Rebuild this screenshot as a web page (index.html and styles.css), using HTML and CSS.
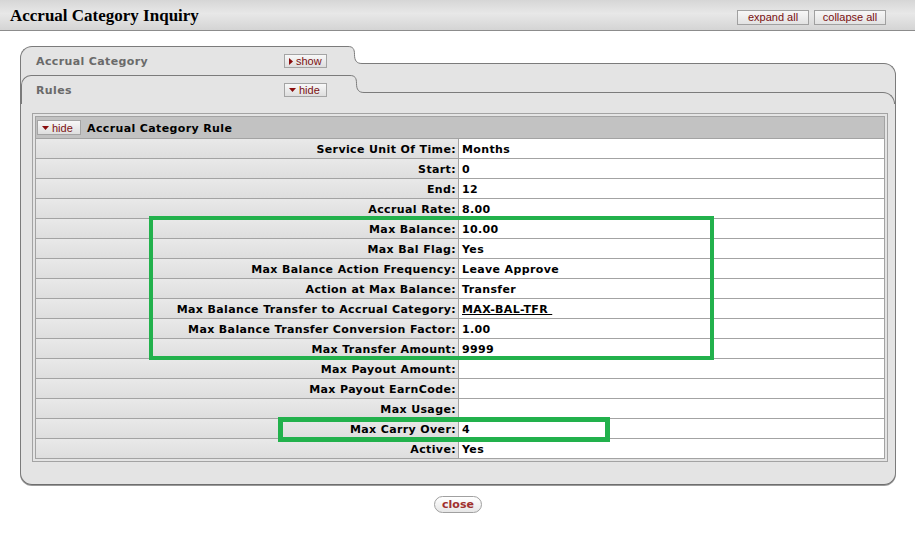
FILE: index.html
```html
<!DOCTYPE html>
<html>
<head>
<meta charset="utf-8">
<title>Accrual Category Inquiry</title>
<link rel="stylesheet" href="styles.css">
</head>
<body>
<div class="header">
  <h1 class="title">Accrual Category Inquiry</h1>
  <div class="hbtns">
    <button class="hbtn">expand all</button>
    <button class="hbtn">collapse all</button>
  </div>
</div>
<div class="main">
  <div class="tab1">
    <div class="tabhead">
      <div class="tab-l">
        <span class="tab-title">Accrual Category</span>
        <button class="tog"><svg class="tri-r" width="4" height="7" viewBox="0 0 4 7"><path d="M0 0 L4 3.5 L0 7 Z"/></svg>show</button>
      </div>
      <svg class="curve" width="14" height="29" viewBox="0 0 14 29"><path class="cfill" d="M0 0.5 C5 0.5 6.5 3 6.5 8.5 C6.5 14.5 8.5 17.5 14 17.5 L14 29 L0 29 Z"/><path class="cline" d="M0 0.5 C5 0.5 6.5 3 6.5 8.5 C6.5 14.5 8.5 17.5 14 17.5"/></svg>
      <div class="tab-r"></div>
    </div>
    <div class="tab1-body">
      <div class="tabhead t2">
        <div class="tab-l">
          <span class="tab-title">Rules</span>
          <button class="tog"><svg class="tri-d" width="7" height="4" viewBox="0 0 7 4"><path d="M0 0 L7 0 L3.5 4 Z"/></svg>hide</button>
        </div>
        <svg class="curve" width="14" height="29" viewBox="0 0 14 29"><path class="cfill" d="M0 0.5 C5 0.5 6.5 3 6.5 8.5 C6.5 14.5 8.5 17.5 14 17.5 L14 29 L0 29 Z"/><path class="cline" d="M0 0.5 C5 0.5 6.5 3 6.5 8.5 C6.5 14.5 8.5 17.5 14 17.5"/></svg>
        <div class="tab-r"></div>
      </div>
      <div class="content">
        <div class="box">
          <table class="rules">
            <colgroup><col class="c1"><col class="c2"></colgroup>
            <tr class="hrow">
              <td colspan="2"><div class="hcell"><button class="tog small"><svg class="tri-d" width="7" height="4" viewBox="0 0 7 4"><path d="M0 0 L7 0 L3.5 4 Z"/></svg>hide</button><span class="sect">Accrual Category Rule</span></div></td>
            </tr>
            <tr><th>Service Unit Of Time:</th><td>Months</td></tr>
            <tr><th>Start:</th><td>0</td></tr>
            <tr><th>End:</th><td>12</td></tr>
            <tr><th>Accrual Rate:</th><td>8.00</td></tr>
            <tr><th>Max Balance:</th><td>10.00</td></tr>
            <tr><th>Max Bal Flag:</th><td>Yes</td></tr>
            <tr><th>Max Balance Action Frequency:</th><td>Leave Approve</td></tr>
            <tr><th>Action at Max Balance:</th><td>Transfer</td></tr>
            <tr><th>Max Balance Transfer to Accrual Category:</th><td><a class="lnk" href="#">MAX-BAL-TFR&nbsp;</a></td></tr>
            <tr><th>Max Balance Transfer Conversion Factor:</th><td>1.00</td></tr>
            <tr><th>Max Transfer Amount:</th><td>9999</td></tr>
            <tr><th>Max Payout Amount:</th><td></td></tr>
            <tr><th>Max Payout EarnCode:</th><td></td></tr>
            <tr><th>Max Usage:</th><td></td></tr>
            <tr><th>Max Carry Over:</th><td>4</td></tr>
            <tr><th>Active:</th><td>Yes</td></tr>
          </table>
        </div>
      </div>
    </div>
  </div>
  <div class="actions"><button class="close">close</button></div>
</div>
<div class="mark m1"></div>
<div class="mark m2"></div>
</body>
</html>
```
FILE: styles.css
```css
* { box-sizing: border-box; }
html, body { margin: 0; padding: 0; background: #fff; }
body {
  position: relative;
  width: 915px;
  font-family: "DejaVu Sans", Verdana, sans-serif;
  font-size: 11px;
  color: #000;
}
.header {
  height: 31px;
  border-bottom: 1px solid #8c8c8c;
  background: linear-gradient(180deg, #d6d6d6 0%, #e8e8e8 45%, #d4d4d4 100%);
  display: flex;
  justify-content: space-between;
  align-items: flex-start;
  padding: 0 29px 0 10px;
}
.title {
  margin: 0;
  padding-top: 1px;
  font: bold 17px/30px "Liberation Serif", "Times New Roman", serif;
  color: #000;
}
.hbtns { display: flex; gap: 5px; margin-top: 10px; }
.hbtn {
  height: 15px;
  width: 72px;
  padding: 0;
  border: 1px solid #a0a0a0;
  background: linear-gradient(#f7f7f7, #e2e2e2);
  color: #7a1010;
  font: 11px/13px "Liberation Sans", Tahoma, sans-serif;
}
.main { padding: 15px 19px 0 20px; }
.tabhead { display: flex; height: 29px; }
.tab-l {
  width: 328px;
  flex: none;
  display: flex;
  align-items: center;
  justify-content: space-between;
  padding: 0 21px 0 15px;
  background: #e4e4e4;
  border-top: 1px solid #7b7b7b;
  border-left: 1px solid #7b7b7b;
  border-top-left-radius: 12px;
}
.t2 .tab-l { width: 329px; padding: 0 23px 0 14px; border-top-left-radius: 10px; }
.curve { flex: none; display: block; }
.cfill { fill: #e4e4e4; }
.cline { fill: none; stroke: #7b7b7b; stroke-width: 1; }
.tab-r {
  flex: 1;
  margin-top: 17px;
  background: #e4e4e4;
  border-top: 1px solid #7b7b7b;
  border-right: 1px solid #7b7b7b;
  border-top-right-radius: 12px;
}
.tab-title {
  font-weight: bold;
  font-size: 11px;
  letter-spacing: 0.37px;
  color: #6a6a6a;
  padding-top: 1px;
}
.tog {
  display: flex;
  align-items: center;
  gap: 3px;
  width: 43px;
  height: 14px;
  padding: 0 0 0 4px;
  border: 1px solid #a4a4a4;
  background: linear-gradient(#f8f8f8, #dedede);
  color: #7b1111;
  font: 11px/12px "Liberation Sans", Tahoma, sans-serif;
}
.tog svg { fill: #8a0d0d; flex: none; }
.tog.small { width: 44px; height: 15px; }
.tab1-body {
  background: #e4e4e4;
  border-left: 1px solid #7b7b7b;
  border-right: 1px solid #7b7b7b;
  border-bottom: 1px solid #6e6e6e;
  border-radius: 0 0 12px 12px;
  box-shadow: 0 1px 0 #9a9a9a;
}
.content { padding: 9px 7px 22px 11px; }
.box { border: 1px solid #a3a3a3; padding: 2px; }
.rules {
  width: 850px;
  table-layout: fixed;
  border-collapse: separate;
  border-spacing: 0;
  border-top: 1px solid #a3a3a3;
  border-left: 1px solid #a3a3a3;
}
.c1 { width: 423px; }
.c2 { width: 426px; }
.rules th, .rules td {
  height: 20px;
  padding: 2px 3px 0;
  line-height: 17px;
  border-right: 1px solid #a3a3a3;
  border-bottom: 1px solid #a3a3a3;
  font-weight: bold;
  font-size: 11px;
  letter-spacing: 0.37px;
  white-space: nowrap;
  vertical-align: middle;
}
.rules th {
  text-align: right;
  padding-right: 2px;
  background: linear-gradient(#e9e9e9, #dedede);
}
.rules td { text-align: left; background: #fff; }
.rules .hrow td { height: 22px; background: #c2c2c2; padding: 0 0 0 1px; }
.hcell { display: flex; align-items: center; gap: 6px; }
.sect { font-weight: bold; font-size: 11px; letter-spacing: 0.37px; padding-top: 2px; }
.lnk { color: #000; text-decoration: underline; }
.actions { display: flex; justify-content: center; padding-top: 11px; }
.close {
  width: 48px;
  height: 17px;
  padding: 0;
  border: 1px solid #a0a0a0;
  border-radius: 9px;
  background: linear-gradient(#ffffff, #e6e6e6);
  color: #a0302e;
  font: bold 11px/15px "DejaVu Sans", Verdana, sans-serif;
}
.mark { position: absolute; border: 4px solid #22b14c; }
.m1 { left: 149px; top: 216px; width: 565px; height: 144px; }
.m2 { left: 278px; top: 417px; width: 332px; height: 25px; border-width: 5px; }
```
